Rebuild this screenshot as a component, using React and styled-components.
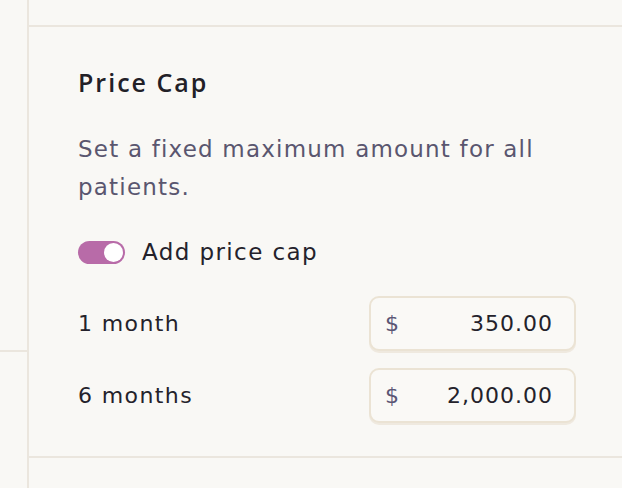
import React, { useState } from 'react';
import styled, { createGlobalStyle } from 'styled-components';

const GlobalStyle = createGlobalStyle`
  html, body {
    margin: 0;
    padding: 0;
    background: #f9f8f5;
  }
  body {
    font-family: 'DejaVu Sans', 'Liberation Sans', sans-serif;
    overflow: hidden;
  }
`;

const Page = styled.div`
  display: flex;
  width: 622px;
  height: 488px;
  background: #f9f8f5;
`;

const Sidebar = styled.div`
  width: 27px;
  flex-shrink: 0;
  border-right: 2px solid #ebe6de;
  display: flex;
  flex-direction: column;
`;

const SidebarBlock = styled.div`
  height: 350px;
  border-bottom: 2px solid #ebe6de;
`;

const Main = styled.div`
  flex: 1;
  display: flex;
  flex-direction: column;
`;

const TopStrip = styled.div`
  height: 25px;
  border-bottom: 2px solid #ebe6de;
`;

const Section = styled.section`
  padding: 41px 46px 33px 49px;
  border-bottom: 2px solid #ebe6de;
`;

const Title = styled.h2`
  margin: 0;
  font-family: 'Open Sans', sans-serif;
  font-size: 25px;
  line-height: 28px;
  font-weight: 600;
  letter-spacing: 2px;
  color: #222027;
`;

const Description = styled.p`
  margin: 34px 0 0;
  font-size: 23px;
  line-height: 38px;
  letter-spacing: 1.2px;
  color: #5a566f;
`;

const ToggleRow = styled.label`
  display: flex;
  align-items: center;
  gap: 17px;
  margin-top: 33px;
  font-size: 23px;
  letter-spacing: 1.4px;
  color: #24222b;
  cursor: pointer;
`;

const Track = styled.span`
  position: relative;
  width: 47px;
  height: 23px;
  border-radius: 12px;
  background: ${({ $on }) => ($on ? '#b86ba8' : '#d8d2cb')};
  flex-shrink: 0;
`;

const Knob = styled.span`
  position: absolute;
  top: 2px;
  left: ${({ $on }) => ($on ? '26px' : '2px')};
  width: 19px;
  height: 19px;
  border-radius: 50%;
  background: #fff;
`;

const Rows = styled.div`
  display: flex;
  flex-direction: column;
  gap: 17px;
  margin-top: 31px;
`;

const Row = styled.div`
  display: flex;
  align-items: center;
  justify-content: space-between;
`;

const RowLabel = styled.span`
  font-size: 22px;
  letter-spacing: 1.4px;
  color: #24222b;
`;

const AmountBox = styled.div`
  width: 207px;
  height: 55px;
  box-sizing: border-box;
  display: flex;
  align-items: center;
  padding: 0 21px 0 14px;
  border: 2px solid #ebe3d4;
  border-radius: 10px;
  background: #faf9f6;
  box-shadow: 0 2px 0 #efe9df;
`;

const Currency = styled.span`
  font-size: 22px;
  color: #5b5674;
`;

const Amount = styled.span`
  flex: 1;
  text-align: right;
  font-size: 22px;
  letter-spacing: 1px;
  color: #24222b;
`;

const limits = [
  { label: '1 month', value: '350.00' },
  { label: '6 months', value: '2,000.00' },
];

export default function App() {
  const [on, setOn] = useState(true);
  return (
    <>
      <GlobalStyle />
      <Page>
        <Sidebar>
          <SidebarBlock />
        </Sidebar>
        <Main>
          <TopStrip />
          <Section>
            <Title>Price Cap</Title>
            <Description>Set a fixed maximum amount for all patients.</Description>
            <ToggleRow onClick={() => setOn(!on)}>
              <Track $on={on}>
                <Knob $on={on} />
              </Track>
              Add price cap
            </ToggleRow>
            <Rows>
              {limits.map((l) => (
                <Row key={l.label}>
                  <RowLabel>{l.label}</RowLabel>
                  <AmountBox>
                    <Currency>$</Currency>
                    <Amount>{l.value}</Amount>
                  </AmountBox>
                </Row>
              ))}
            </Rows>
          </Section>
        </Main>
      </Page>
    </>
  );
}
